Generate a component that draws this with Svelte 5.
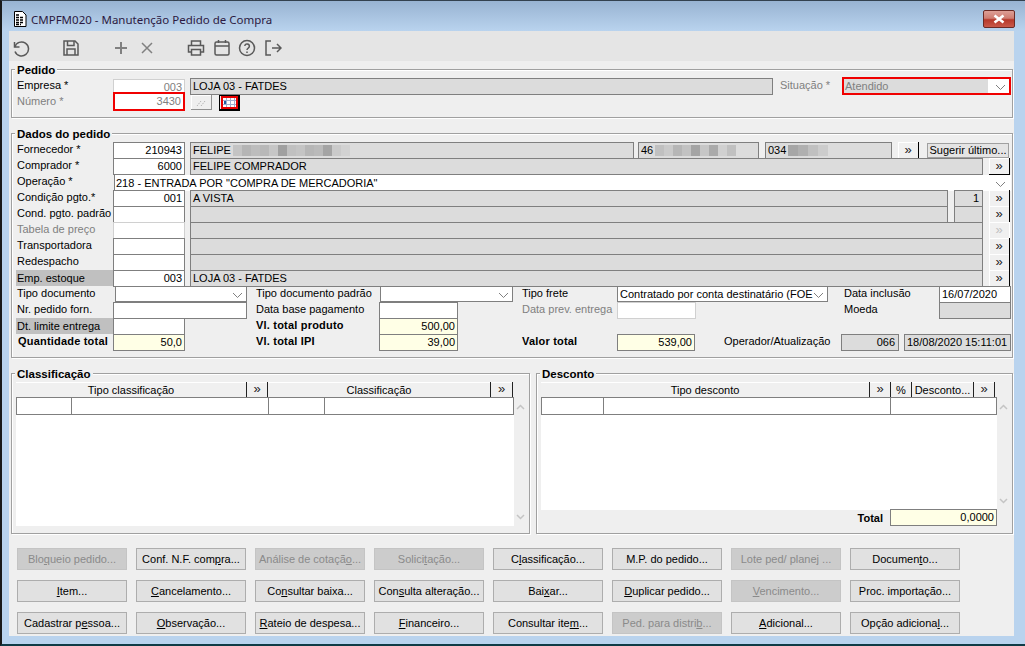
<script>
  const START = 12;
  function place(cells) {
    let cur = START;
    return cells.map((c) => {
      const out = { ...c, ml: c.x - cur };
      cur = c.x + c.w;
      return out;
    });
  }
  const L = (x, w, t, c = 'l') => ({ x, w, t, c });
  const I = (t = '', x = 113, w = 72, c = 'inp') => ({ x, w, t, c });
  const D = (t = '', x = 190, w = 793, extra = {}) => ({ x, w, t, c: 'dis', ...extra });
  const B = (x = 989, c = 'more') => ({ x, w: 21, t: '»', c });
  const S = (t, x, w, extra = '') => ({ x, w, t, c: 'sel ' + extra });

  const pedido = [
    [L(17, 90, 'Empresa *'), I('003', 113, 72, 'inp soft grayt'), { ...D('LOJA 03 - FATDES', 190, 583), dash: true },
     L(780, 60, 'Situação *', 'lg'), S('Atendido', 842, 169, 'red')],
    [L(17, 90, 'Número *', 'lg'), I('3430', 113, 72, 'inp redbox grayt'), { x: 191, w: 21, t: '', c: 'hatch' }, { x: 219, w: 21, t: '', c: 'cal' }]
  ];

  const grayA = ['#c4c4c4','#b5b5b5','#bdbdbd','#b8b8b8','#c6c6c6','#a0a0a0','#c0c0c0','#c4c4c4','#b6b6b6','#bababa','#a4a4a4','#cacaca','#d2d2d2'];
  const grayB = ['#c0c0c0','#cacaca','#b6b6b6','#c2c2c2','#a4a4a4','#c6c6c6','#aaaaaa','#d0d0d0','#c0c0c0'];
  const grayC = ['#a6a6a6','#b0b0b0','#c0c0c0','#cccccc'];

  const dados = [
    [L(17, 90, 'Fornecedor *'), I('210943'), D('FELIPE', 190, 444, { blur: grayA, bw: 9 }), D('46', 638, 121, { blur: grayB, bw: 9 }),
     D('034', 765, 127, { blur: grayC, bw: 10 }), { x: 898, w: 21, t: '»', c: 'more nob' }, { x: 927, w: 82, t: 'Sugerir último...', c: 'sug' }],
    [L(17, 90, 'Comprador *'), I('6000'), D('FELIPE COMPRADOR'), B()],
    [L(17, 90, 'Operação *'), S('218 - ENTRADA POR "COMPRA DE MERCADORIA"', 114, 897, 'wide')],
    [L(17, 90, 'Condição pgto.*'), I('001'), D('A VISTA', 190, 758), D('1', 954, 29, { right: true }), B()],
    [L(17, 95, 'Cond. pgto. padrão'), I(), D('', 190, 758), D('', 954, 29), B()],
    [L(17, 90, 'Tabela de preço', 'lg'), I('', 113, 72, 'inp soft'), D(), B(989, 'more off')],
    [L(17, 90, 'Transportadora'), I(), D(), B()],
    [L(17, 90, 'Redespacho'), I(), D(), B()],
    [L(16, 97, 'Emp. estoque', 'lbg'), I('003'), D('LOJA 03 - FATDES'), B()],
    [L(17, 90, 'Tipo documento'), S('', 115, 132), L(256, 120, 'Tipo documento padrão'), S('', 380, 133), L(522, 90, 'Tipo frete'),
     S('Contratado por conta destinatário (FOE', 617, 211), L(844, 90, 'Data inclusão'), I('16/07/2020', 939, 72, 'inp left')],
    [L(17, 90, 'Nr. pedido forn.'), I('', 113, 134), L(256, 115, 'Data base pagamento'), I('', 379, 79), L(522, 90, 'Data prev. entrega', 'lg'),
     I('', 617, 79, 'inp soft'), L(844, 90, 'Moeda'), D('', 939, 72)],
    [L(16, 97, 'Dt. limite entrega', 'lbg'), I(), L(256, 115, 'Vl. total produto', 'lb'), I('500,00', 379, 79, 'inp yel')],
    [L(18, 95, 'Quantidade total', 'lb'), I('50,0', 113, 72, 'inp yel'), L(256, 115, 'Vl. total IPI', 'lb'), I('39,00', 379, 79, 'inp yel'), L(522, 90, 'Valor total', 'lb'),
     I('539,00', 617, 78, 'inp yel'), L(724, 110, 'Operador/Atualização'), D('066', 841, 58, { right: true }), D('18/08/2020 15:11:01', 904, 107)]
  ].map(place);
  const pedidoRows = pedido.map(place);

  const btns = [
    ['Blo&queio pedido...!', 'Conf. N.F. com&pra...', 'Análise de cotaçã&o...!', 'Solici&tação...!', 'C&lassificação...', 'M.P. do pedido...', 'Lote ped/ planej ...!', 'Documen&to...'],
    ['&Item...', '&Cancelamento...', 'Co&nsultar baixa...', 'Con&sulta alteração...', 'Bai&xar...', '&Duplicar pedido...', '&Vencimento...!', 'Proc. importação...'],
    ['Cadastrar p&essoa...', '&Observação...', '&Rateio de despesa...', '&Financeiro...', 'Consultar ite&m...', 'Ped. para distri&b...!', '&Adicional...', 'Opção adiciona&l...']
  ].flat().map((s) => {
    const off = s.endsWith('!');
    const raw = off ? s.slice(0, -1) : s;
    const i = raw.indexOf('&');
    return i < 0
      ? { off, a: raw, u: '', b: '' }
      : { off, a: raw.slice(0, i), u: raw[i + 1], b: raw.slice(i + 2) };
  });
</script>

<div class="window">
  <header class="title">
    <svg class="doc" viewBox="0 0 14 16" width="14" height="16">
      <path d="M1.500 .5h8l3.500 3.500v11.500h-11.500z" fill="#fff" stroke="#000"/>
      <path d="M3 4h4M3 6.500h8M3 9h8M3 11.500h8M3 13.500h5" stroke="#000" stroke-width="1.300" stroke-dasharray="3 1"/>
    </svg>
    <span class="ttext">CMPFM020 - Manutenção Pedido de Compra</span>
    <div class="close">
      <svg viewBox="0 0 14 10" width="14" height="10"><path d="M2.500 1.500l9 7M11.500 1.500l-9 7" stroke="#fff" stroke-width="2.600"/></svg>
    </div>
  </header>

  <main class="client">
    <nav class="toolbar">
      <svg viewBox="0 0 18 18"><path d="M2.500 3v5h5"/><path d="M2.800 8A7 7 0 1 1 3 12.500"/></svg>
      <svg class="m32" viewBox="0 0 18 18"><path d="M2 2h11l3 3v11H2z"/><path d="M5.500 2v4.500h6.500V2M5 16v-6h8v6"/></svg>
      <svg class="m32 light" viewBox="0 0 18 18"><path d="M3 9h12M9 3v12" stroke-width="2"/></svg>
      <svg class="m8 light" viewBox="0 0 18 18"><path d="M4 4l10 10M14 4L4 14"/></svg>
      <svg class="m31" viewBox="0 0 18 18"><path d="M4.500 6V2h9v4M4.500 13H1.500V6.500h15V13h-3"/><path d="M4.500 10.500h9V16h-9z"/></svg>
      <svg class="m8" viewBox="0 0 18 18"><rect x="2" y="3" width="14" height="13" rx="1.500"/><path d="M2 7h14M5.500 1v3M12.500 1v3"/></svg>
      <svg class="m7" viewBox="0 0 18 18"><circle cx="9" cy="9" r="7.500"/><path d="M6.800 7a2.300 2.200 0 1 1 3.500 2c-.9.6-1.300 1-1.300 2M9 12.500v1.500"/></svg>
      <svg class="m8" viewBox="0 0 18 18"><path d="M7 2H2v14h5M8 9h9M13 5l4 4-4 4"/></svg>
    </nav>

    <section class="group pedido">
      <h2 class="legend">Pedido</h2>
      {#each pedidoRows as row}
        <div class="row">
          {#each row as cell}{@render fieldCell(cell)}{/each}
        </div>
      {/each}
    </section>

    <section class="group dados">
      <h2 class="legend">Dados do pedido</h2>
      {#each dados as row}
        <div class="row">
          {#each row as cell}{@render fieldCell(cell)}{/each}
        </div>
      {/each}
    </section>

    <div class="pair">
      <section class="group classif">
        <h2 class="legend">Classificação</h2>
        <div class="ghead">
          <div class="gh w231">Tipo classificação</div><div class="gh gm w21">»</div>
          <div class="gh w223">Classificação</div><div class="gh gm w22">»</div>
        </div>
        <div class="gwrap">
          <div class="gbody tall">
            <div class="grow"><i class="w55"></i><i class="w197"></i><i class="w56"></i><i class="grow1"></i></div>
          </div>
          {@render scroll()}
        </div>
      </section>

      <section class="group desc">
        <h2 class="legend">Desconto</h2>
        <div class="ghead">
          <div class="gh w329">Tipo desconto</div><div class="gh gm w21">»</div><div class="gh w21">%</div>
          <div class="gh w62">Desconto...</div><div class="gh gm w21">»</div>
        </div>
        <div class="gwrap">
          <div class="gbody short">
            <div class="grow"><i class="w62b"></i><i class="w287"></i><i class="grow1"></i></div>
          </div>
          {@render scroll()}
        </div>
        <div class="total">
          <span>Total</span><div class="cell inp yel totv"><span class="txt">0,0000</span></div>
        </div>
      </section>
    </div>

    <div class="buttons">
      {#each btns as b}
        <button class="act" class:off={b.off}>{b.a}{#if b.u}<u>{b.u}</u>{/if}{b.b}</button>
      {/each}
    </div>
  </main>
</div>

{#snippet chevron()}
  <svg class="chev" viewBox="0 0 11 7" width="11" height="7"><path d="M1 1l4.500 4.500L10 1" fill="none" stroke="#808080"/></svg>
{/snippet}

{#snippet scroll()}
  <div class="sbar">
    <svg viewBox="0 0 9 6" width="9" height="6"><path d="M1 5l3.500-3.500L8 5" fill="none" stroke="#c4c4c4" stroke-width="1.500"/></svg>
    <svg viewBox="0 0 9 6" width="9" height="6"><path d="M1 1l3.500 3.500L8 1" fill="none" stroke="#c4c4c4" stroke-width="1.500"/></svg>
  </div>
{/snippet}

{#snippet fieldCell(cell)}
  <div class="cell {cell.c}" class:right={cell.right} style="margin-left:{cell.ml}px;width:{cell.w}px">
    {#if cell.c === 'cal'}
      <svg viewBox="0 0 17 13" width="17" height="13">
        <rect x="1" y="1" width="15" height="11" fill="#fff" stroke="#e80000" stroke-width="2"/>
        <path d="M2 4.500h13M2 8.500h13M5.500 2v9M9.500 2v9M13.500 2v9" stroke="#9fb0cf"/>
        <rect x="3" y="5" width="2" height="3" fill="#1f5fa0"/>
      </svg>
    {:else if cell.c === 'hatch'}
      <svg viewBox="0 0 12 10" width="12" height="10"><path d="M2 9l4-5M6 9l4-5" stroke="#b5b5b5" stroke-dasharray="1.500 1"/></svg>
    {:else}
      <span class="txt">{cell.t}</span>
      {#if cell.blur}
        <span class="blur">{#each cell.blur as col}<b style="background:{col};width:{cell.bw}px"></b>{/each}</span>
      {/if}
      {#if cell.c.startsWith('sel')}{@render chevron()}{/if}
      {#if cell.dash}<span class="dash"></span>{/if}
    {/if}
  </div>
{/snippet}

<style>
  :global(body) { margin: 0; background: #fff; overflow: hidden; }
  .window {
    width: 1025px; height: 646px; box-sizing: border-box;
    display: flex; flex-direction: column;
    padding: 0 11px 8px 7px;
    background: #b9d3ee;
    border-left: 2px solid #1a1a1a; border-top: 1px solid #33414f; border-bottom: 2px solid #0f3b46;
    font: 11px "Liberation Sans", Arial, sans-serif; color: #000;
  }
  .title {
    height: 30px; flex: none; display: flex; align-items: center; box-sizing: border-box;
    background: linear-gradient(#98b3d2, #b9d3ee);
    margin: 0 -11px 0 -7px; padding: 6px 10px 0 11px;
  }
  .ttext { font: 11.5px "Noto Sans", "Open Sans", sans-serif; color: #2c1a42; margin-left: 4px; }
  .close {
    margin-left: auto; width: 32px; height: 18px; box-sizing: border-box;
    border: 1px solid #6b2a25; border-radius: 2px;
    background: linear-gradient(#dd9f96 0, #cf7d72 45%, #b6382a 55%, #c9594a 100%);
    display: flex; align-items: center; justify-content: center;
  }
  .client {
    flex: 1; background: #efefef; display: flex; flex-direction: column; min-height: 0;
  }
  .toolbar {
    height: 30px; flex: none; background: #e5e5e5; display: flex; align-items: center; padding: 0 0 0 3px;
  }
  .toolbar svg { width: 18px; height: 18px; flex: none; fill: none; stroke: #595959; stroke-width: 1.500; margin-top: 4px; }
  .toolbar svg.light { stroke: #808080; }
  .m32 { margin-left: 32px; }
  .m31 { margin-left: 31px; }
  .m8 { margin-left: 8px; }
  .m7 { margin-left: 7px; }

  .group {
    position: relative; box-sizing: border-box; border: 1px solid #a0a0a0;
    box-shadow: inset 1px 1px 0 #fff, 1px 1px 0 #fff; flex: none;
  }
  .pedido { margin: 8px 1px 0 2px; height: 49px; padding-top: 8px; }
  .dados { margin: 15px 1px 0 2px; height: 225px; padding-top: 8px; }
  .pair { display: flex; margin: 15px 1px 0 2px; height: 161px; flex: none; }
  .classif { width: 519px; height: 161px; padding: 8px 0 0 4px; }
  .desc { width: 477px; height: 161px; margin-left: 6px; padding: 8px 0 0 4px; }
  .legend {
    position: absolute; left: 3px; top: -7px; margin: 0; padding: 0 2px; background: #efefef;
    font: bold 11.5px/14px "Liberation Sans", Arial, sans-serif;
  }

  .row { display: flex; height: 16px; align-items: flex-start; }
  .cell {
    box-sizing: border-box; flex: none; height: 17px; line-height: 15px; white-space: nowrap; overflow: hidden;
    display: flex; align-items: center; position: relative;
  }
  .txt { display: block; }
  .l, .lg, .lb, .lbg { height: 15px; overflow: visible; }
  .lg { color: #808080; }
  .lb { font-weight: bold; letter-spacing: .2px; }
  .lbg { background: #c0c0c0; height: 16px; padding-left: 1px; }
  .inp { background: #fff; border: 1px solid #7f7f7f; justify-content: flex-end; padding-right: 2px; }
  .inp.left { justify-content: flex-start; padding-left: 2px; }
  .soft { border-color: #d0d0d0; }
  .grayt { color: #808080; }
  .inp.soft.grayt { height: 16px; margin-top: 1px; }
  .redbox { border: 2px solid #f00000; height: 19px; margin-top: -2px; }
  .yel, .inp.yel { background: #ffffe6; }
  .dis { background: #dcdcdc; border: 1px solid #7f7f7f; padding-left: 2px; }
  .dis.right { justify-content: flex-end; padding-right: 3px; }
  .dash {
    position: absolute; left: -1px; bottom: -1px; width: 240px; height: 1px;
    background:
      linear-gradient(90deg, #f4f4f4 0 64px, transparent 64px),
      repeating-linear-gradient(90deg, #7f7f7f 0 8px, #fff 8px 14px);
  }
  .blur { display: flex; height: 11px; margin-left: 2px; }
  .blur b { display: block; height: 100%; flex: none; }
  .sel { background: #fff; border: 1px solid #7f7f7f; padding-left: 2px; justify-content: space-between; height: 16px; padding-right: 3px; }
  .sel.wide { border-top: 0; border-bottom: 0; height: 16px; margin-top: 1px; padding-left: 1px; border-right: 0; padding-right: 5px; }
  .sel.red { border: 2px solid #f00000; background: linear-gradient(90deg, #dcdcdc 144px, #fff 144px); color: #808080; height: 18px; margin-top: -1px; padding-right: 3px; padding-left: 1px; }
  .chev { flex: none; margin-top: 2px; }
  .more {
    background: #f0f0f0; border-right: 1px solid #000; border-bottom: 1px solid #000;
    box-shadow: inset 1px 1px 0 #fff; justify-content: center; font-size: 13px; padding-bottom: 2px; color: #222;
  }
  .more.nob { border-bottom: 0; }
  .more.off { color: #c0c0c0; border-right-color: #fff; border-bottom-color: #a0a0a0; }
  .sug {
    background: #e4e4e4; border: 1px solid #a0a0a0; height: 15px; margin-top: 1px; justify-content: center;
    line-height: 13px;
  }
  .hatch {
    background: #efefef; border-right: 1px solid #909090; border-bottom: 1px solid #909090;
    box-shadow: inset 1px 1px 0 #fff; height: 15px; margin-top: 1px; justify-content: center;
  }
  .cal {
    background: #f0f0f0; border-right: 2px solid #000; border-bottom: 2px solid #000; border-top: 1px solid #000; border-left: 1px solid #000;
    height: 16px; margin-top: 1px; justify-content: center;
  }

  .ghead { display: flex; height: 15px; width: max-content; }
  .gh {
    box-sizing: border-box; flex: none; background: #f0f0f0; text-align: center; line-height: 15px;
    border-right: 1px solid #222; box-shadow: inset 0 1px 0 #fff;
    white-space: nowrap; padding-top: 1px;
  }
  .gm { font-size: 13px; line-height: 12px; color: #222; }
  .w231 { width: 231px; } .w21 { width: 21px; } .w22 { width: 22px; } .w223 { width: 223px; }
  .w329 { width: 329px; } .w62 { width: 62px; }
  .gwrap { display: flex; }
  .gbody { background: #fff; border-top: 1px solid #7f7f7f; }
  .tall { width: 498px; height: 128px; }
  .short { width: 456px; height: 112px; }
  .grow { display: flex; height: 16px; border-bottom: 1px solid #7f7f7f; border-left: 1px solid #7f7f7f; border-right: 1px solid #7f7f7f; }
  .grow i { display: block; flex: none; box-sizing: border-box; border-right: 1px solid #7f7f7f; }
  .grow i.grow1 { flex: 1; border-right: 0; }
  .w55 { width: 55px; } .w197 { width: 197px; } .w56 { width: 56px; } .w62b { width: 62px; } .w287 { width: 287px; }
  .sbar { width: 13px; flex: none; display: flex; flex-direction: column; justify-content: space-between; align-items: center; padding: 7px 0 6px; box-sizing: border-box; }
  .total { display: flex; justify-content: flex-end; align-items: center; width: 456px; height: 17px; margin-top: -1px; font-weight: bold; }
  .total > span { margin-right: 7px; }
  .totv { width: 107px; font-weight: normal; }

  .buttons {
    margin: 14px 0 0 8px; display: grid; gap: 10px 9px;
    grid-template-columns: repeat(8, 110px); grid-auto-rows: 22px;
  }
  .act {
    margin: 0; padding: 0; box-sizing: border-box; background: #e1e1e1; border: 1px solid #adadad;
    font: 11px "Liberation Sans", Arial, sans-serif; color: #000; white-space: nowrap;
  }
  .act.off { background: #cccccc; color: #8a8a8a; border-color: #c4c4c4; }
</style>
